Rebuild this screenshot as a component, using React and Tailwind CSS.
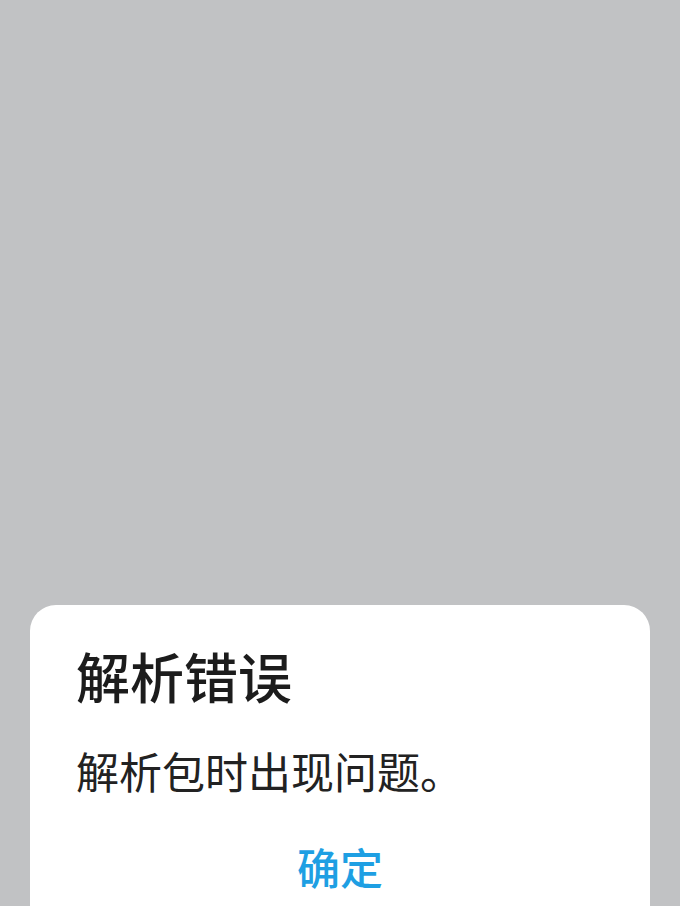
import React from 'react';

export default function App() {
  return (
    <div className="h-[906px] w-full overflow-hidden bg-[#c1c2c4] px-[30px] pt-[605px] font-['Noto_Sans_CJK_SC','Noto_Sans',sans-serif]">
      {/* Dialog sheet */}
      <div className="h-[340px] rounded-[26px] bg-white px-[46px] pt-[44px]">
        <h1 className="text-[54px] leading-[54px] font-medium text-[#1c1c1c]">解析错误</h1>
        <p className="mt-[46px] text-[43px] leading-[43px] text-[#222222]">解析包时出现问题。</p>
        <div className="mt-[53px] flex justify-center">
          <button className="text-[43px] leading-[43px] font-medium text-[#1e9fe3]">确定</button>
        </div>
      </div>
    </div>
  );
}
